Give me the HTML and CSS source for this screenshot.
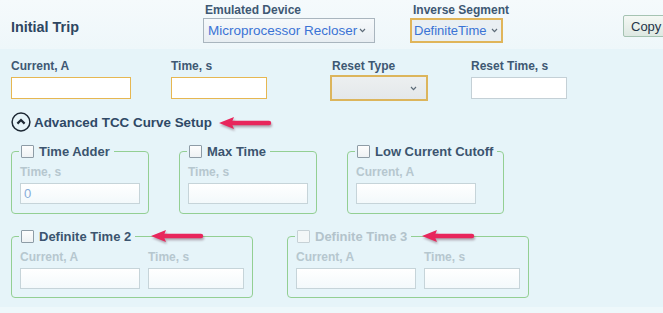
FILE: index.html
```html
<!DOCTYPE html>
<html lang="en">
<head>
  <meta charset="UTF-8" />
  <title>Initial Trip</title>
  <link rel="stylesheet" href="styles.css">
</head>
<body>
  <div class="trip-panel">
    <header class="trip-head">
      <h2 class="trip-title">Initial Trip</h2>
      <div class="head-field head-field-device">
        <span class="field-label">Emulated Device</span>
        <div class="select select-device">
          <span>Microprocessor Recloser</span>
          <svg class="chev" width="7" height="5" viewBox="0 0 7 5"><path d="M1 1 L3.5 3.6 L6 1" /></svg>
        </div>
      </div>
      <div class="head-field head-field-segment">
        <span class="field-label">Inverse Segment</span>
        <div class="select select-segment">
          <span>DefiniteTime</span>
          <svg class="chev" width="7" height="5" viewBox="0 0 7 5"><path d="M1 1 L3.5 3.6 L6 1" /></svg>
        </div>
      </div>
      <button class="copy-btn">Copy</button>
    </header>

    <section class="trip-body">
      <div class="trip-row">
        <div class="trip-col col-current">
          <label class="field-label">Current, A</label>
          <input class="text-input input-warn input-wide" type="text">
        </div>
        <div class="trip-col col-time">
          <label class="field-label">Time, s</label>
          <input class="text-input input-warn input-narrow" type="text">
        </div>
        <div class="trip-col col-reset">
          <label class="field-label field-label-shift">Reset Type</label>
          <div class="select select-reset">
            <svg class="chev" width="7" height="5" viewBox="0 0 7 5"><path d="M1 1 L3.5 3.6 L6 1" /></svg>
          </div>
        </div>
        <div class="trip-col">
          <label class="field-label">Reset Time, s</label>
          <input class="text-input input-plain input-narrow" type="text">
        </div>
      </div>

      <div class="adv-toggle">
        <svg class="adv-icon" width="20" height="20" viewBox="0 0 20 20">
          <circle cx="10" cy="10" r="8.9" />
          <polyline points="6.4,11.6 10,8 13.6,11.6" />
        </svg>
        <span class="adv-text">Advanced TCC Curve Setup</span>
        <svg class="note-arrow adv-arrow" width="54" height="16" viewBox="0 0 54 16">
          <polygon points="1,8 16,2 13.5,8 16,14" />
          <line x1="13" y1="8" x2="51" y2="8" />
        </svg>
      </div>

      <div class="curve-row curve-row-top">
        <fieldset class="curve-box box-single">
          <legend class="curve-legend"><span class="check"></span>Time Adder</legend>
          <label class="muted-label">Time, s</label>
          <input class="text-input box-input input-wide" type="text" value="0">
        </fieldset>
        <fieldset class="curve-box box-single">
          <legend class="curve-legend"><span class="check"></span>Max Time</legend>
          <label class="muted-label">Time, s</label>
          <input class="text-input box-input input-wide" type="text">
        </fieldset>
        <fieldset class="curve-box box-cutoff">
          <legend class="curve-legend"><span class="check"></span>Low Current Cutoff</legend>
          <label class="muted-label">Current, A</label>
          <input class="text-input box-input input-wide" type="text">
        </fieldset>
      </div>

      <div class="curve-row curve-row-bottom">
        <fieldset class="curve-box box-double">
          <legend class="curve-legend">
            <span class="check"></span>Definite Time 2
            <svg class="note-arrow legend-arrow" width="54" height="16" viewBox="0 0 54 16">
              <polygon points="1,8 16,2 13.5,8 16,14" />
              <line x1="13" y1="8" x2="51" y2="8" />
            </svg>
          </legend>
          <div class="pair">
            <div>
              <label class="muted-label">Current, A</label>
              <input class="text-input box-input input-wide" type="text">
            </div>
            <div>
              <label class="muted-label">Time, s</label>
              <input class="text-input box-input input-narrow" type="text">
            </div>
          </div>
        </fieldset>
        <fieldset class="curve-box box-double is-disabled">
          <legend class="curve-legend">
            <span class="check"></span>Definite Time 3
            <svg class="note-arrow legend-arrow legend-arrow-near" width="54" height="16" viewBox="0 0 54 16">
              <polygon points="1,8 16,2 13.5,8 16,14" />
              <line x1="13" y1="8" x2="51" y2="8" />
            </svg>
          </legend>
          <div class="pair">
            <div>
              <label class="muted-label">Current, A</label>
              <input class="text-input box-input input-wide" type="text">
            </div>
            <div>
              <label class="muted-label">Time, s</label>
              <input class="text-input box-input input-narrow" type="text">
            </div>
          </div>
        </fieldset>
      </div>
    </section>
  </div>
</body>
</html>
```

FILE: styles.css
```css
* {
  box-sizing: border-box;
}

body {
  margin: 0;
  background-color: #eef8fb;
  font-family: "Liberation Sans", Arial, sans-serif;
  overflow: hidden;
}

.trip-panel {
  background-color: #e6f4f9;
  padding-bottom: 9px;
}

/* header band */
.trip-head {
  display: flex;
  align-items: flex-start;
  height: 49px;
  padding: 3px 0 0 11px;
  background: linear-gradient(#f5fafc, #eef7fa);
}

.trip-head > * {
  flex-shrink: 0;
}

.trip-title {
  width: 192px;
  margin: 15px 0 0;
  font-size: 14.4px;
  line-height: 18px;
  font-weight: bold;
  color: #2e4661;
}

.head-field {
  display: flex;
  flex-direction: column;
}

.head-field-device {
  width: 207px;
}

.head-field-segment {
  width: 93px;
}

.head-field .field-label {
  padding-left: 2px;
  margin-bottom: 1px;
  white-space: nowrap;
}

.head-field-segment .field-label {
  padding-left: 3px;
}

.field-label {
  display: block;
  font-size: 12px;
  line-height: 14px;
  font-weight: bold;
  color: #3e5873;
  margin-bottom: 4px;
}

.field-label-shift {
  padding-left: 2px;
}

.select {
  display: flex;
  align-items: center;
  justify-content: space-between;
  height: 25px;
  padding: 0 8px 0 4px;
  font-size: 13.5px;
  color: #3a73d5;
}

.chev {
  fill: none;
  stroke: #5d6b78;
  stroke-width: 1.2;
}

.select-device {
  width: 172px;
  border: 1px solid #a9b5be;
  background: linear-gradient(#f6f9fb, #e8eef2);
}

.select-segment {
  width: 93px;
  border: 2px solid #e0b55a;
  background: #e9eff3;
  padding: 0 3px 0 2px;
  font-size: 13px;
}

.copy-btn {
  height: 22px;
  width: 50px;
  margin: 12px 0 0 120px;
  padding: 0 0 0 7px;
  text-align: left;
  border: 1px solid #a5c3b2;
  border-radius: 2px;
  background: linear-gradient(#f4f8f4, #dde8e2);
  font-family: inherit;
  font-size: 13px;
  color: #1f3448;
}

/* body */
.trip-body {
  padding: 10px 0 0 11px;
}

.trip-row {
  display: flex;
}

.col-current {
  width: 160px;
}

.col-time {
  width: 159px;
}

.col-reset {
  width: 141px;
}

.text-input {
  display: block;
  height: 22px;
  padding: 0 3px;
  border: 1px solid #c4d0d6;
  background: #fff;
  font-family: inherit;
  font-size: 13px;
  outline: none;
}

.input-wide {
  width: 120px;
}

.input-narrow {
  width: 96px;
}

.input-warn {
  border-color: #e6b752;
}

.select-reset {
  width: 98px;
  height: 26px;
  margin: -2px 0 -2px;
  justify-content: flex-end;
  padding-right: 9px;
  border: 2px solid #dcb55c;
  background: linear-gradient(#eceff0, #e4e8ea);
}

.adv-toggle {
  display: flex;
  align-items: center;
  height: 20px;
  margin-top: 13px;
}

.adv-icon {
  fill: none;
  stroke: #1c2733;
}

.adv-icon circle {
  stroke-width: 1.5;
}

.adv-icon polyline {
  stroke-width: 2.2;
}

.adv-text {
  margin-left: 3px;
  font-size: 13.4px;
  font-weight: bold;
  color: #2f4966;
}

.note-arrow {
  filter: drop-shadow(1px 2px 1.2px rgba(70, 20, 40, 0.35));
}

.note-arrow polygon {
  fill: #e8265c;
}

.note-arrow line {
  stroke: #e8265c;
  stroke-width: 4.4;
  stroke-linecap: round;
}

.adv-arrow {
  margin: 1px 0 0 6px;
}

/* curve option boxes */
.curve-row {
  display: flex;
}

.curve-row-top {
  gap: 30px;
  margin-top: 12px;
}

.curve-row-bottom {
  gap: 34px;
  margin-top: 15px;
}

.curve-box {
  margin: 0;
  min-width: 0;
  padding: 7px 8px 9px;
  border: 1px solid #93cf93;
  border-radius: 4px;
}

.box-single {
  width: 138px;
}

.box-cutoff {
  width: 157px;
}

.box-double {
  width: 242px;
  padding-bottom: 8px;
}

.curve-legend {
  position: relative;
  display: flex;
  align-items: center;
  gap: 5px;
  height: 14px;
  margin-left: -1px;
  padding: 0 4px 0 2px;
  font-size: 13px;
  font-weight: bold;
  color: #3b546f;
  white-space: nowrap;
}

.check {
  display: inline-block;
  width: 13px;
  height: 13px;
  border: 1px solid #8e9ca6;
  border-radius: 1px;
  background: linear-gradient(#fdfdfd, #eef2f4);
}

.legend-arrow {
  position: absolute;
  top: -1px;
  left: calc(100% + 15px);
}

.legend-arrow-near {
  left: calc(100% + 10px);
}

.muted-label {
  display: block;
  font-size: 12px;
  line-height: 14px;
  font-weight: bold;
  color: #b6c7cf;
  margin-bottom: 4px;
}

.box-input {
  height: 21px;
  border-color: #c6d4d9;
  background: linear-gradient(#ffffff, #f3f9fb);
  color: #86acd9;
}

.pair {
  display: flex;
  gap: 8px;
}

.is-disabled .curve-legend {
  color: #b3c3cb;
}

.is-disabled .check {
  border-color: #c6d1d6;
  background: #f3f7f8;
}
```
